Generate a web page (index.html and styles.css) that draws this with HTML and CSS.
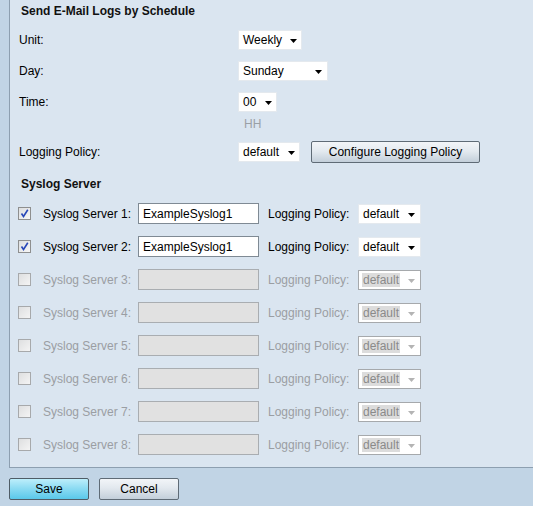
FILE: index.html
```html
<!DOCTYPE html>
<html>
<head>
<meta charset="utf-8">
<link rel="stylesheet" href="styles.css">
</head>
<body>
<div class="page">
  <div class="panel">
    <div class="heading">Send E-Mail Logs by Schedule</div>
    <div class="row">
      <span class="lbl">Unit:</span>
      <div class="sel w-unit"><span class="val">Weekly</span><svg class="arr" width="7" height="4" viewBox="0 0 7 4"><path d="M0 0H7L3.5 4Z"/></svg></div>
    </div>
    <div class="row">
      <span class="lbl">Day:</span>
      <div class="sel w-day"><span class="val">Sunday</span><svg class="arr" width="7" height="4" viewBox="0 0 7 4"><path d="M0 0H7L3.5 4Z"/></svg></div>
    </div>
    <div class="row row-time">
      <span class="lbl">Time:</span>
      <div class="sel w-time"><span class="val">00</span><svg class="arr" width="7" height="4" viewBox="0 0 7 4"><path d="M0 0H7L3.5 4Z"/></svg></div>
    </div>
    <div class="row-hint"><span class="hint">HH</span></div>
    <div class="row">
      <span class="lbl">Logging Policy:</span>
      <div class="sel w-pol"><span class="val">default</span><svg class="arr" width="7" height="4" viewBox="0 0 7 4"><path d="M0 0H7L3.5 4Z"/></svg></div>
      <button class="btn btn-cfg" type="button">Configure Logging Policy</button>
    </div>

    <div class="heading heading2">Syslog Server</div>

    <div class="srow">
      <span class="cb"><svg width="11" height="11" viewBox="0 0 11 11"><path d="M2.5 5.5L4.5 8.5L8.8 1.8" fill="none" stroke="#2747b8" stroke-width="1.6"/></svg></span>
      <span class="slbl">Syslog Server 1:</span>
      <input class="txt" type="text" value="ExampleSyslog1">
      <span class="plbl">Logging Policy:</span>
      <div class="sel w-spol"><span class="val">default</span><svg class="arr" width="7" height="4" viewBox="0 0 7 4"><path d="M0 0H7L3.5 4Z"/></svg></div>
    </div>
    <div class="srow">
      <span class="cb"><svg width="11" height="11" viewBox="0 0 11 11"><path d="M2.5 5.5L4.5 8.5L8.8 1.8" fill="none" stroke="#2747b8" stroke-width="1.6"/></svg></span>
      <span class="slbl">Syslog Server 2:</span>
      <input class="txt" type="text" value="ExampleSyslog1">
      <span class="plbl">Logging Policy:</span>
      <div class="sel w-spol"><span class="val">default</span><svg class="arr" width="7" height="4" viewBox="0 0 7 4"><path d="M0 0H7L3.5 4Z"/></svg></div>
    </div>
    <div class="srow off">
      <span class="cb"></span>
      <span class="slbl">Syslog Server 3:</span>
      <input class="txt" type="text" disabled>
      <span class="plbl">Logging Policy:</span>
      <div class="sel w-spol dis"><span class="val">default</span><svg class="arr" width="7" height="4" viewBox="0 0 7 4"><path d="M0 0H7L3.5 4Z"/></svg></div>
    </div>
    <div class="srow off">
      <span class="cb"></span>
      <span class="slbl">Syslog Server 4:</span>
      <input class="txt" type="text" disabled>
      <span class="plbl">Logging Policy:</span>
      <div class="sel w-spol dis"><span class="val">default</span><svg class="arr" width="7" height="4" viewBox="0 0 7 4"><path d="M0 0H7L3.5 4Z"/></svg></div>
    </div>
    <div class="srow off">
      <span class="cb"></span>
      <span class="slbl">Syslog Server 5:</span>
      <input class="txt" type="text" disabled>
      <span class="plbl">Logging Policy:</span>
      <div class="sel w-spol dis"><span class="val">default</span><svg class="arr" width="7" height="4" viewBox="0 0 7 4"><path d="M0 0H7L3.5 4Z"/></svg></div>
    </div>
    <div class="srow off">
      <span class="cb"></span>
      <span class="slbl">Syslog Server 6:</span>
      <input class="txt" type="text" disabled>
      <span class="plbl">Logging Policy:</span>
      <div class="sel w-spol dis"><span class="val">default</span><svg class="arr" width="7" height="4" viewBox="0 0 7 4"><path d="M0 0H7L3.5 4Z"/></svg></div>
    </div>
    <div class="srow off">
      <span class="cb"></span>
      <span class="slbl">Syslog Server 7:</span>
      <input class="txt" type="text" disabled>
      <span class="plbl">Logging Policy:</span>
      <div class="sel w-spol dis"><span class="val">default</span><svg class="arr" width="7" height="4" viewBox="0 0 7 4"><path d="M0 0H7L3.5 4Z"/></svg></div>
    </div>
    <div class="srow off">
      <span class="cb"></span>
      <span class="slbl">Syslog Server 8:</span>
      <input class="txt" type="text" disabled>
      <span class="plbl">Logging Policy:</span>
      <div class="sel w-spol dis"><span class="val">default</span><svg class="arr" width="7" height="4" viewBox="0 0 7 4"><path d="M0 0H7L3.5 4Z"/></svg></div>
    </div>
  </div>
  <div class="actions">
    <button class="btn btn-save" type="button">Save</button>
    <button class="btn btn-cancel" type="button">Cancel</button>
  </div>
</div>
</body>
</html>
```

FILE: styles.css
```css
html, body {
  margin: 0;
  padding: 0;
}
body {
  background: #c1d4e5;
  font-family: "Liberation Sans", Arial, sans-serif;
  font-size: 12px;
  color: #000;
  width: 533px;
  height: 506px;
  overflow: hidden;
}
.page {
  padding-left: 9px;
}
.panel {
  background: #dae5f0;
  border-left: 1px solid #8d9fb0;
  border-bottom: 1px solid #8d9fb0;
  padding: 4px 0 12px 0;
}
.heading {
  font-weight: bold;
  line-height: 14px;
  height: 14px;
  padding-left: 11px;
  color: #111;
}
.heading2 {
  margin-top: 15px;
}
.row {
  display: flex;
  align-items: center;
  height: 20px;
  margin-top: 12px;
  padding-left: 9px;
}
.row + .row {
  margin-top: 11px;
}
.row-hint {
  height: 14px;
  line-height: 14px;
  margin-top: 5px;
  padding-left: 234px;
}
.row-hint + .row {
  margin-top: 11px;
}
.hint {
  color: #9aa0a6;
}
.lbl {
  width: 219px;
  flex: none;
}
.sel {
  position: relative;
  box-sizing: border-box;
  height: 20px;
  background: #fff;
  border: 1px solid #e4e9ee;
  display: flex;
  align-items: center;
  padding-left: 3px;
  flex: none;
}
.sel .val {
  line-height: 14px;
  padding: 0 1px;
}
.sel .arr {
  position: absolute;
  right: 4px;
  top: 8px;
  fill: #000;
}
.w-unit { width: 64px; }
.w-day { width: 90px; }
.w-time { width: 39px; }
.w-pol { width: 62px; }
.w-spol { width: 63px; }
.w-day .arr { right: 5px; }
.srow .sel .arr { right: 5px; }
.btn {
  font-family: "Liberation Sans", Arial, sans-serif;
  font-size: 12px;
  color: #000;
  box-sizing: border-box;
  height: 22px;
  border: 1px solid #5f6b76;
  border-radius: 2px;
  background: linear-gradient(#f2f5f8, #e4eaf0 45%, #c3cfda);
  padding: 0;
  cursor: pointer;
}
.btn-cfg {
  width: 169px;
  margin-left: 11px;
}
.srow {
  display: flex;
  align-items: center;
  height: 21px;
  margin-top: 12px;
  padding-left: 8px;
}
.cb {
  box-sizing: border-box;
  width: 13px;
  height: 13px;
  border: 1px solid #8e8f8f;
  background: linear-gradient(135deg, #dcdee0, #f6f6f6);
  display: flex;
  align-items: center;
  justify-content: center;
  flex: none;
}
.cb svg {
  display: block;
}
.slbl {
  margin-left: 12px;
  width: 95px;
  flex: none;
}
.txt {
  box-sizing: border-box;
  width: 121px;
  height: 21px;
  border: 1px solid #7f8a94;
  background: #fff;
  font-family: "Liberation Sans", Arial, sans-serif;
  font-size: 12px;
  color: #000;
  padding: 0 4px;
  margin: 0;
  flex: none;
}
.plbl {
  margin-left: 9px;
  width: 90px;
  flex: none;
}
.srow .sel {
  height: 20px;
}
.off .slbl,
.off .plbl {
  color: #9a9ea3;
}
.off .cb {
  border-color: #a7a9ab;
  background: linear-gradient(135deg, #dedfe0, #f4f4f4);
}
.off .txt {
  background: #e1e1e1;
  border-color: #a9adb1;
}
.sel.dis {
  border-color: #a6a9ac;
}
.sel.dis .val {
  background: #dcdcdc;
  color: #8a8a8a;
}
.sel.dis .arr {
  fill: #b4b4b4;
}
.actions {
  display: flex;
  gap: 10px;
  margin-top: 10px;
}
.btn-save,
.btn-cancel {
  width: 80px;
}
.btn-save {
  background: linear-gradient(#bdeefb, #8edcf3 45%, #5ac8ea);
  border-color: #4f5c66;
}
.btn-cancel {
  background: linear-gradient(#f2f5f8, #e2e8ee 45%, #c3cfda);
}
```
